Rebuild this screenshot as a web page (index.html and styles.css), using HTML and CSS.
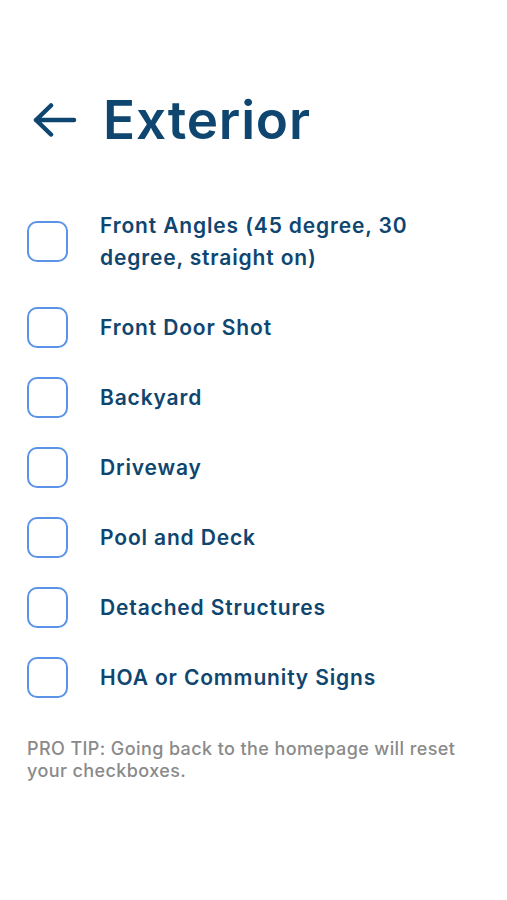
FILE: index.html
```html
<!DOCTYPE html>
<html lang="en">
<head>
    <meta charset="UTF-8">
    <meta name="viewport" content="width=device-width, initial-scale=1.0">
    <title>Exterior</title>
    <link rel="stylesheet" href="styles.css">
</head>
<body>
    <div class="container">
        <div class="header">
            <a class="back" href="#">
                <svg width="44" height="34" viewBox="0 0 44 34" fill="none">
                    <path d="M3 17H41M18 2.5L3 17L18 31.5" stroke="#0f4670" stroke-width="4.5" stroke-linecap="round" stroke-linejoin="round"/>
                </svg>
            </a>
            <h1>Exterior</h1>
        </div>

        <ul class="checklist">
            <li><span class="box"></span><span class="label">Front Angles (45 degree, 30 degree, straight on)</span></li>
            <li><span class="box"></span><span class="label">Front Door Shot</span></li>
            <li><span class="box"></span><span class="label">Backyard</span></li>
            <li><span class="box"></span><span class="label">Driveway</span></li>
            <li><span class="box"></span><span class="label">Pool and Deck</span></li>
            <li><span class="box"></span><span class="label">Detached Structures</span></li>
            <li><span class="box"></span><span class="label">HOA or Community Signs</span></li>
        </ul>

        <p class="tip">PRO TIP: Going back to the homepage will reset your checkboxes.</p>
    </div>
</body>
</html>
```

FILE: styles.css
```css
body {
    margin: 0;
    padding: 0;
    background-color: #ffffff;
    font-family: Inter, "Noto Sans", sans-serif;
    color: #0f4670;
}
.container {
    padding: 85px 40px 0 27px;
}
.header {
    display: flex;
    align-items: center;
    height: 70px;
}
.back {
    display: flex;
    margin-left: 6px;
    margin-right: 26px;
}
h1 {
    margin: 0;
    font-size: 53px;
    font-weight: 600;
    line-height: 70px;
    letter-spacing: 0.8px;
}
.checklist {
    list-style: none;
    margin: 35px 0 0;
    padding: 0;
}
.checklist li {
    display: flex;
    align-items: center;
}
.box {
    flex: none;
    width: 37px;
    height: 37px;
    border: 2px solid #5b93e8;
    border-radius: 10px;
    margin-right: 32px;
}
.label {
    padding: 20px 0 18px;
    font-size: 21px;
    font-weight: 600;
    line-height: 32px;
    letter-spacing: 0.85px;
}
.tip {
    margin: 26px 0 0;
    font-size: 18px;
    font-weight: 500;
    line-height: 22px;
    letter-spacing: 0.4px;
    color: #8a8a8a;
}
```
